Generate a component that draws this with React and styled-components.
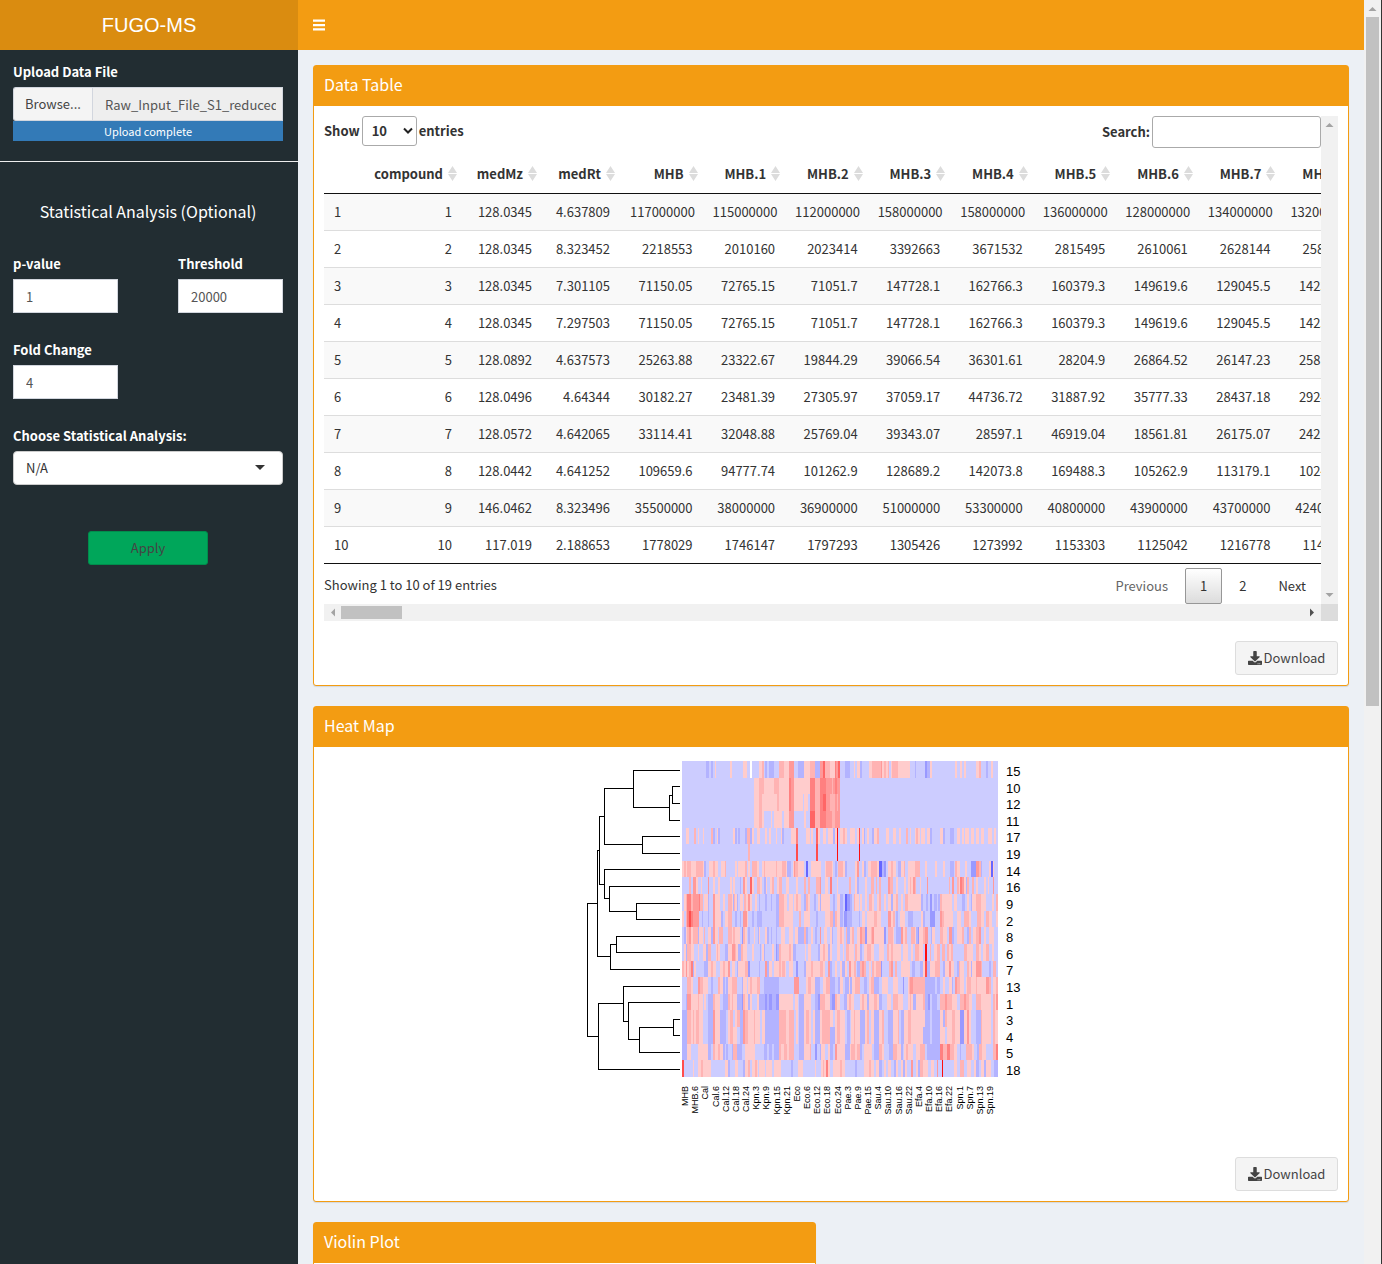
import React from "react";
import styled, { createGlobalStyle } from "styled-components";

const GlobalStyle = createGlobalStyle`
  *, *::before, *::after { box-sizing: border-box; }
  html, body, #root { height: 100%; }
  body {
    margin: 0;
    overflow: hidden;
    background: #ecf0f5;
    color: #333;
    font: 400 13px/20px "Source Sans Pro", "Noto Sans CJK SC", "Noto Sans", sans-serif;
  }
  button, input, select { font: inherit; color: inherit; margin: 0; }
`;

/* ---------- page frame ---------- */

const Page = styled.div`
  display: flex;
  height: 100vh;
`;

const Sidebar = styled.aside`
  flex: none;
  width: 298px;
  background: #222d32;
  color: #fff;
`;

const Logo = styled.a`
  display: block;
  height: 50px;
  background: #da8c10;
  color: #fff;
  font: 20px/50px "Liberation Sans", Arial, sans-serif;
  text-align: center;
  text-decoration: none;
`;

const Main = styled.div`
  flex: 1;
  min-width: 0;
  overflow: hidden;
`;

const Navbar = styled.header`
  display: flex;
  align-items: center;
  height: 50px;
  padding: 0 15px;
  background: #f39c12;
`;

const MenuButton = styled.button`
  display: flex;
  padding: 0;
  border: 0;
  background: none;
  color: #fff;
`;

const Content = styled.main`
  display: flex;
  flex-direction: column;
  gap: 20px;
  padding: 15px;
`;

/* ---------- scroll bars ---------- */

const PageRail = styled.div`
  flex: none;
  display: flex;
  flex-direction: column;
  align-items: center;
  width: 18px;
  background: #f1f1f1;
  border-right: 1px solid #333;
`;

const VRail = styled.div`
  flex: none;
  display: flex;
  flex-direction: column;
  justify-content: space-between;
  align-items: center;
  width: 17px;
  background: #f1f1f1;
`;

const HRail = styled.div`
  flex: 1;
  display: flex;
  align-items: center;
  background: #f1f1f1;
`;

const RailCorner = styled.div`
  width: 17px;
  background: #dcdcdc;
`;

const Thumb = styled.div`
  width: ${(p) => p.$w};
  height: ${(p) => p.$h};
  margin-right: ${(p) => (p.$push ? "auto" : "0")};
  background: #c1c1c1;
`;

const turns = { up: 0, right: 90, down: 180, left: 270 };
const RailArrow = ({ dir, dark }) => (
  <svg width="17" height="17" viewBox="0 0 17 17" aria-hidden="true">
    <path
      d="M4.500 11h8L8.500 7z"
      fill={dark ? "#505050" : "#a3a3a3"}
      transform={`rotate(${turns[dir]} 8.500 8.500)`}
    />
  </svg>
);

/* ---------- sidebar form ---------- */

const FormSection = styled.section`
  display: flex;
  flex-direction: column;
  padding: ${(p) => p.$pad};
  border-bottom: ${(p) => (p.$ruled ? "1px solid #eee" : "0")};
`;

const Label = styled.label`
  display: block;
  margin-bottom: 5px;
  font-weight: 700;
`;

const FileRow = styled.div`
  display: flex;
  height: 34px;
`;

const BrowseButton = styled.button`
  flex: none;
  width: 79px;
  padding: 0;
  border: 1px solid #d2d6de;
  border-right: 0;
  border-radius: 3px 0 0 3px;
  background: #f4f4f4;
  color: #444;
`;

const TextInput = styled.input`
  width: 100%;
  min-width: 0;
  height: 34px;
  padding: ${(p) => (p.readOnly ? "6px 6px 6px 12px" : "6px 12px")};
  border: 1px solid #d2d6de;
  border-radius: 0;
  outline: 0;
  background: ${(p) => (p.readOnly ? "#eee" : "#fff")};
  color: #555;
`;

const Progress = styled.div`
  height: 20px;
  background: #337ab7;
  font-size: 11px;
  text-align: center;
`;

const SectionTitle = styled.h4`
  margin: 0 0 33px;
  font-size: 16px;
  font-weight: 400;
  line-height: 20px;
  text-align: center;
`;

const FieldGrid = styled.div`
  display: grid;
  grid-template-columns: 105px 105px;
  justify-content: space-between;
  row-gap: 27px;
  margin-bottom: 27px;
`;

const SelectWrap = styled.span`
  display: inline-grid;
  align-items: center;
  width: ${(p) => p.$w};
  & > * { grid-area: 1 / 1; }
  & > svg {
    justify-self: end;
    margin-right: ${(p) => p.$inset};
    pointer-events: none;
  }
`;

const Select = styled.select`
  width: 100%;
  height: ${(p) => p.$h};
  padding: 0 ${(p) => p.$padX};
  border: 1px solid ${(p) => p.$line};
  border-radius: ${(p) => p.$radius};
  appearance: none;
  outline: 0;
  background: #fff;
  color: #333;
`;

const ApplyButton = styled.button`
  align-self: center;
  width: 120px;
  height: 34px;
  margin-top: 46px;
  border: 1px solid #008d4c;
  border-radius: 3px;
  background: #00a65a;
  color: #444;
`;

/* ---------- boxes ---------- */

const Box = styled.section`
  width: ${(p) => (p.$half ? "503px" : "auto")};
  border: 1px solid #f39c12;
  border-radius: 3px;
  background: #fff;
  box-shadow: 0 1px 1px rgba(0, 0, 0, 0.1);
`;

const BoxTitle = styled.h3`
  margin: 0;
  height: 40px;
  padding: 8px 10px;
  background: #f39c12;
  color: #fff;
  font-size: 16px;
  font-weight: 400;
  line-height: 20px;
`;

const BoxBody = styled.div`
  display: flex;
  flex-direction: column;
  gap: ${(p) => p.$gap || "0"};
  min-height: 60px;
  padding: 10px;
`;

const DownloadButton = styled.button`
  display: flex;
  align-items: center;
  justify-content: center;
  gap: 2px;
  align-self: flex-end;
  width: 103px;
  height: 34px;
  padding: 0;
  border: 1px solid #ddd;
  border-radius: 3px;
  background: #f4f4f4;
  color: #444;
`;

const Download = () => (
  <DownloadButton type="button">
    <svg width="14" height="14" viewBox="0 0 512 512" fill="currentColor" aria-hidden="true">
      <path d="M216 0h80c13.300 0 24 10.700 24 24v168h87.700c17.800 0 26.700 21.500 14.100 34.100L269.700 378.300c-7.500 7.500-19.800 7.500-27.300 0L90.100 226.100c-12.600-12.600-3.700-34.100 14.100-34.100H192V24c0-13.300 10.700-24 24-24zm296 376v112c0 13.300-10.700 24-24 24H24c-13.300 0-24-10.700-24-24V376c0-13.300 10.700-24 24-24h146.700l49 49c20.100 20.100 52.500 20.100 72.600 0l49-49H488c13.300 0 24 10.700 24 24zm-124 88c0-11-9-20-20-20s-20 9-20 20 9 20 20 20 20-9 20-20zm64 0c0-11-9-20-20-20s-20 9-20 20 9 20 20 20 20-9 20-20z" />
    </svg>
    Download
  </DownloadButton>
);

/* ---------- data table ---------- */

const ScrollFrame = styled.div`
  display: flex;
  flex-direction: column;
`;

const ScrollRow = styled.div`
  display: flex;
  height: ${(p) => p.$h || "auto"};
`;

const ScrollView = styled.div`
  flex: 1;
  min-width: 0;
  overflow: hidden;
`;

const TableBar = styled.div`
  display: flex;
  justify-content: space-between;
  height: ${(p) => p.$h};
`;

const InlineLabel = styled.label`
  display: flex;
  align-items: center;
  gap: 2px;
  height: ${(p) => p.$h};
  font-weight: 700;
`;

const SearchInput = styled.input`
  width: 169px;
  height: 32px;
  padding: 5px;
  border: 1px solid #aaa;
  border-radius: 3px;
  outline: 0;
  background: transparent;
`;

const Table = styled.table`
  width: 1039px;
  table-layout: fixed;
  border-collapse: separate;
  border-spacing: 0;
  border-bottom: 1px solid #111;
`;

const Col = styled.col`
  width: ${(p) => p.$w || "auto"};
`;

const HeadCell = styled.th`
  height: 40px;
  padding: 0 4px 0 0;
  border-bottom: 1px solid #111;
  line-height: 20px;
  white-space: nowrap;
`;

const HeadInner = styled.span`
  display: flex;
  align-items: center;
  justify-content: flex-end;
  gap: 4px;
`;

const Row = styled.tr`
  background: ${(p) => (p.$odd ? "#f9f9f9" : "#fff")};
  & > * {
    height: ${(p) => (p.$first ? "36px" : "37px")};
    padding: 0 10px;
    border-top: ${(p) => (p.$first ? "0" : "1px solid #ddd")};
    font-weight: 400;
    text-align: right;
  }
  & > th { text-align: left; }
`;

const Info = styled.div`
  padding-top: 11px;
`;

const Pager = styled.nav`
  display: flex;
  gap: 2px;
  padding-top: 4px;
`;

const PageButton = styled.button`
  min-width: 37px;
  height: 36px;
  padding: 0 14px;
  border: 1px solid ${(p) => (p.$current ? "#979797" : "transparent")};
  border-radius: 2px;
  background: ${(p) => (p.$current ? "linear-gradient(#fff, #dcdcdc)" : "transparent")};
  color: ${(p) => (p.disabled ? "#666" : "#333")};
`;

const SortIcon = () => (
  <svg width="11" height="15" viewBox="0 0 11 15" fill="#dcdcdc" aria-hidden="true">
    <path d="M5.500 0L10 7H1zM5.500 15L10 8H1z" />
  </svg>
);

const headings = ["compound", "medMz", "medRt", "MHB", "MHB.1", "MHB.2", "MHB.3", "MHB.4", "MHB.5", "MHB.6", "MHB.7", "MHB.8"];

const records = [
  "1 128.0345 4.637809 117000000 115000000 112000000 158000000 158000000 136000000 128000000 134000000 132000000",
  "2 128.0345 8.323452 2218553 2010160 2023414 3392663 3671532 2815495 2610061 2628144 2580412",
  "3 128.0345 7.301105 71150.05 72765.15 71051.7 147728.1 162766.3 160379.3 149619.6 129045.5 142310.4",
  "4 128.0345 7.297503 71150.05 72765.15 71051.7 147728.1 162766.3 160379.3 149619.6 129045.5 142310.4",
  "5 128.0892 4.637573 25263.88 23322.67 19844.29 39066.54 36301.61 28204.9 26864.52 26147.23 25811.62",
  "6 128.0496 4.64344 30182.27 23481.39 27305.97 37059.17 44736.72 31887.92 35777.33 28437.18 29240.31",
  "7 128.0572 4.642065 33114.41 32048.88 25769.04 39343.07 28597.1 46919.04 18561.81 26175.07 24218.55",
  "8 128.0442 4.641252 109659.6 94777.74 101262.9 128689.2 142073.8 169488.3 105262.9 113179.1 102447.8",
  "9 146.0462 8.323496 35500000 38000000 36900000 51000000 53300000 40800000 43900000 43700000 42400000",
  "10 117.019 2.188653 1778029 1746147 1797293 1305426 1273992 1153303 1125042 1216778 1142086",
].map((line) => line.split(" "));

const DataTable = () => (
  <ScrollFrame>
    <ScrollRow $h="488px">
      <ScrollView>
        <TableBar $h="38px">
          <InlineLabel $h="30px">
            Show
            <SelectWrap $w="55px" $inset="4px">
              <Select $h="30px" $padX="9px" $radius="3px" $line="#aaa" defaultValue="10">
                <option>10</option>
                <option>25</option>
                <option>50</option>
                <option>100</option>
              </Select>
              <svg width="10" height="8" viewBox="0 0 10 8" fill="none" stroke="#222" strokeWidth="2">
                <path d="M1 1.500l4 4 4-4" />
              </svg>
            </SelectWrap>
            entries
          </InlineLabel>
          <InlineLabel $h="32px">
            Search:
            <SearchInput type="search" />
          </InlineLabel>
        </TableBar>
        <Table>
          <colgroup>
            <Col $w="44px" />
            <Col $w="94px" />
            <Col $w="80px" />
            <Col $w="78px" />
            {headings.slice(3).map((h) => <Col key={h} />)}
          </colgroup>
          <thead>
            <tr>
              <HeadCell />
              {headings.map((h) => (
                <HeadCell key={h} scope="col">
                  <HeadInner>{h}<SortIcon /></HeadInner>
                </HeadCell>
              ))}
            </tr>
          </thead>
          <tbody>
            {records.map((cells, i) => (
              <Row key={i} $odd={i % 2 === 0} $first={i === 0}>
                <th scope="row">{i + 1}</th>
                {cells.map((c, j) => <td key={j}>{c}</td>)}
              </Row>
            ))}
          </tbody>
        </Table>
        <TableBar $h="40px">
          <Info>Showing 1 to 10 of 19 entries</Info>
          <Pager aria-label="Table pages">
            <PageButton type="button" disabled>Previous</PageButton>
            <PageButton type="button" $current>1</PageButton>
            <PageButton type="button">2</PageButton>
            <PageButton type="button">Next</PageButton>
          </Pager>
        </TableBar>
      </ScrollView>
      <VRail><RailArrow dir="up" /><RailArrow dir="down" /></VRail>
    </ScrollRow>
    <ScrollRow $h="17px">
      <HRail>
        <RailArrow dir="left" />
        <Thumb $w="61px" $h="13px" $push />
        <RailArrow dir="right" dark />
      </HRail>
      <RailCorner />
    </ScrollRow>
  </ScrollFrame>
);

/* ---------- heat map ---------- */

const palette = {
  L: "#ccccff", B: "#b3b3ff", D: "#9999ff", E: "#6666ff", P: "#ffcccc", Q: "#ffb3b3",
  R: "#ff9999", S: "#ff8080", T: "#ff6666", U: "#ff4d4d", V: "#ff0d0d", W: "#ffffff",
};

/* Each row: label, then colour changes ("start + colour") for the left and the right half. */
const heatRows = [
  ["15", "21L 93B 102L 108B 114L 120P 124L 165P 171L 204P 216L 225W 231L 252P 261Q 267L 270B 276L 282B 297L 312Q 327P 342R 357L 369B 387P 405Q 420B 435R 444T 450Q 465P",
    "0S 3R 9T 15L 30B 45L 57P 60L 66P 75B 81L 102P 111Q 138R 141P 147Q 153P 159Q 162L 168P 171Q 189P 225L 240B 243L 270D 276B 285P 291L 360P 366L 375P 381L 387P 393L 423P 432Q 438L 453B 459L 468P 474L"],
  ["10", "21L 237P 252Q 267P 297Q 312P 342S 348R 357P 405S 420Q 435S 453R 471Q 474R", "0S 6R 15L"],
  ["12", "21L 237P 252Q 261P 306Q 312P 342S 348R 357P 384L 387P 399L 405S 420Q 435S 444T 453R 465Q", "0R 6Q 9R 15L"],
  ["11", "21L 237P 252Q 261P 267L 288P 291L 297P 321L 327P 342R 357L 387P 393L 405T 420Q 435S 453R 471Q", "0R 15L"],
  ["17", "21L 33P 42L 57Q 63L 69P 72L 84P 87L 108Q 114B 120L 126P 129B 135L 174P 180B 186L 189B 195L 210B 216Q 225B 231P 237L 246P 255L 270P 276L 282P 288L 303P 306L 318P 321B 327L 348P 363S 369L 393P 405L 408P 414L 423T 429P 435L 444P 453L 459P 474B",
    "0P 6V 9L 15P 24Q 30P 36L 45P 60L 66P 72U 75L 81P 87B 90L 96P 102L 111B 117P 126Q 132L 153P 162L 174P 183L 192P 198L 213Q 219L 225P 228L 240P 243Q 249P 255L 258P 270L 276P 285B 291L 306P 306L 315P 324B 330L 345B 357L 366P 375L 381P 387L 390P 402L 408P 417L 423P 432L 438P 447L 459P 471L 477P 483L"],
  ["19", "21L 219Q 225L 363U 369L 423U 429L", "0L 6V 9L 72V 75L"],
  ["14", "21P 27Q 33P 36Q 48P 63Q 84P 87B 93L 102P 114Q 120P 129L 138P 150Q 153L 180P 186L 189P 210Q 216L 219P 225L 231Q 246P 252L 261P 267Q 270P 303Q 306P 321Q 333P 336B 348L 354P 357R 360Q 369P 387L 393E 399L 408P 438L 450P 453Q 471P 474L",
    "0B 6L 9Q 24P 30B 36L 60P 66R 72L 81P 87B 93L 99P 108Q 126P 132E 141B 147D 153L 159P 168Q 174P 183L 189B 198P 207Q 210L 219P 240Q 255L 270P 276L 300P 306L 324P 330L 345B 357L 360Q 366P 375L 390P 396L 408D 423R 432Q 438B 441L 462P 468E 474P 477L"],
  ["16", "21L 42Q 48L 54R 63P 69L 78P 81L 99R 102L 114P 120L 129P 135L 165P 171L 174P 180L 195B 198L 204R 210P 216L 225T 231P 237L 246Q 255P 261L 267B 273P 276L 285P 291Q 297L 306P 312Q 321L 333P 342L 363P 369L 387Q 393L 399Q 405L 423Q 435R 438L 450P 459L 465S 471L",
    "0L 6P 9L 42Q 48L 60P 66B 72L 90P 96L 108Q 117L 123Q 126L 132Q 138L 159R 165Q 174L 183P 189L 207P 213L 219P 225Q 228P 234R 240Q 243L 255P 258L 276R 279L 342Q 345L 351R 357L 366Q 372P 375S 381R 387P 393B 396Q 402L 411Q 417L 423P 429L 447P 453L 459P 462L 474R 477L"],
  ["9", "21L 27P 33Q 36S 48Q 54R 72S 75Q 84L 87P 99B 102L 114R 120P 135L 144P 150L 159Q 171P 174B 177Q 180P 186B 189L 195P 204L 207Q 213P 219R 225P 231L 240P 246L 252B 255L 270B 276L 288B 291L 303B 312Q 327P 336L 342P 354L 357P 363Q 369P 378L 387B 393Q 399P 405L 417B 423L 429P 435B 438P 465L 474B",
    "0L 6P 15B 24L 30E 36D 45B 51L 57Q 60P 72L 75P 81L 90P 96L 102Q 111P 117L 126P 132Q 138L 147P 153L 159P 168B 174P 183Q 189L 198P 204L 210Q 219P 258B 264L 273B 279L 285D 291L 297B 306L 309B 315Q 321P 351L 357P 366L 381B 390L 396P 402L 408B 411P 423Q 438P 453L 471P 477L 483Q"],
  ["2", "21P 27L 33Q 36S 42U 48S 54R 72L 81B 84L 99B 102L 114R 120P 138B 144L 150P 159Q 171L 180B 186L 195B 198L 204R 216P 219L 231B 237L 246B 261L 303B 312Q 327P 354L 372Q 378L 387P 405L 423B 429L 450P 465Q 474B",
    "0Q 6P 15B 24L 27D 36B 51L 72B 75L 81P 90L 96P 117Q 126P 138L 159R 168P 174Q 180L 183B 189L 195P 210L 219B 234L 258P 264B 270L 285D 300L 315R 321Q 327P 354L 366P 378L 387Q 402P 408L 426Q 438P 447L 453Q 462P 471L 483P"],
  ["8", "21L 27B 33P 36Q 42R 48P 54Q 69B 72P 84L 87Q 90L 99P 108B 114R 120P 129L 132Q 144L 159Q 171P 174Q 180P 195L 201D 204Q 210P 216L 219B 225L 237P 240L 249B 252P 255L 270P 276B 282L 288B 291L 303B 306L 318P 330L 342P 354L 360P 369B 387Q 393B 399L 408P 414L 420B 426L 435R 438L 447P 456L 465P 471B 474L",
    "0L 6P 15Q 21P 27L 33Q 36B 45P 51Q 57L 66P 75R 81Q 90D 96P 108Q 111R 117P 147D 153L 159Q 168Q 174P 177L 183B 198R 204P 210Q 216L 228Q 240P 243B 249D 252P 264Q 270R 279L 288B 291P 300L 315Q 324P 336L 342R 351B 357L 366P 381Q 387L 396B 402Q 408L 414P 423Q 432R 438L 447P 453L 462P 477L"],
  ["6", "21L 27P 33B 36Q 48P 57L 69P 72L 84P 93B 99Q 108L 123P 126Q 129P 135L 150B 159P 171R 180Q 183P 189B 198Q 204P 216L 231P 237L 255B 258L 261P 267B 270L 291P 297L 303D 306B 312Q 318P 342Q 348P 354B 363L 390P 393L 399P 408L 429B 435P 444Q 450P 459B 465P 471L",
    "0L 6P 15L 24P 27L 33Q 42P 57L 60Q 66P 75B 81L 87P 96Q 108P 117L 132P 147L 156Q 162P 168Q 174P 198L 204P 219L 228P 234L 240Q 252P 264L 270V 276L 285Q 288L 297P 306Q 315L 321Q 330L 336Q 342P 348Q 354L 387Q 396P 414L 423Q 432P 438L 444P 453Q 462L 471P 477L"],
  ["7", "21Q 27P 33R 36P 42Q 48S 54B 57P 63L 87B 99P 108Q 114P 123L 135P 144Q 150P 159R 165L 171P 180L 186B 189P 210Q 219D 225L 252B 255L 270R 276B 282P 291L 297P 312Q 318P 321Q 330P 333L 342P 354L 363D 369L 387B 393P 408Q 414P 435Q 444P 450L 459R 465B 471L",
    "0P 6L 15P 21B 30P 36L 42R 48P 57Q 63L 66B 75Q 81R 87Q 93L 102P 108L 111Q 117P 123Q 138D 141L 162Q 168R 174L 180Q 186L 198P 225L 231B 240L 255B 264P 270U 276B 285P 300Q 315L 324B 330P 342R 348P 357L 366B 372Q 375P 387L 396Q 402P 408B 411P 423R 438Q 441L 462B 468L 474Q 483L"],
  ["13", "21L 36Q 48P 54L 69R 75Q 84P 99L 108B 114L 129Q 135P 144B 150L 153B 159P 171Q 186L 201B 204P 216L 219P 225Q 231P 246Q 255L 267B 312L 357R 372L 393P 399Q 408P 420B 435L 444P 453Q 465B",
    "0L 9B 15P 24L 30B 42P 45B 51P 60Q 75L 87B 96L 102P 108Q 117B 132L 141P 159L 174P 189L 204D 207L 219P 222Q 225R 234Q 270B 300L 306B 315L 324P 330L 342P 351B 354L 360R 366Q 375P 387L 393P 396Q 408P 423Q 426P 453R 462Q 468L 474P 483Q"],
  ["1", "21L 33B 36R 48P 69Q 72P 84L 87P 93L 99B 114Q 120P 135L 144B 159Q 165P 171Q 174P 186B 201D 204Q 210P 219B 225P 231L 246P 252B 267B 270D 276B 282D 291B 303D 312P 354L 360P 369L 372B 387P 408L 420B 429D 435Q 450P 465B 471D",
    "0Q 6P 15L 27B 36P 42Q 48P 57L 75P 81Q 87P 96B 102P 117Q 126P 132B 141L 156P 168L 174Q 189P 204L 219P 225Q 228P 234B 243P 264Q 270B 279D 285L 291B 306L 315Q 330R 336Q 351P 366L 375Q 387R 393Q 402P 411L 423Q 438P 468L 474Q 480P 483R"],
  ["3", "21B 36Q 48P 54Q 57P 63Q 72P 84L 99B 114R 120P 135B 144B 153L 159P 165Q 174L 180P 186Q 195B 204R 210Q 219P 237Q 240P 255L 261P 270B 312Q 333P 342Q 357L 363P 369L 372B 387P 393Q 402P 408L 414P 420B 435P 441Q 465P 474L",
    "0P 6Q 15P 30L 36B 45L 48P 57Q 60P 75B 90P 96Q 102L 108P 117B 132P 141Q 147L 159B 174P 189Q 192L 198B 207P 219Q 228P 270B 285L 291B 315P 324B 330Q 336P 351Q 360P 375D 387P 396R 402P 408L 423B 438Q 441P 468L 474Q 480P"],
  ["4", "21B 36Q 48P 54Q 57P 63Q 72P 84L 99B 114R 120P 135B 153L 159P 165Q 174P 186L 195B 204R 210Q 219P 237Q 240P 255L 261P 270B 312Q 333P 342Q 357L 363P 369L 372B 387P 393Q 402P 408L 414P 420B 435P 441Q 465B",
    "0P 6Q 15P 30L 36B 45L 48P 57Q 60P 75B 90P 96Q 102L 108P 117B 132P 141Q 147L 159B 174P 189Q 192L 198B 207P 219Q 228P 264B 285L 291B 315P 330L 336P 351Q 360P 375D 387P 396R 402P 408L 423B 438Q 441P 468L 474Q 480P"],
  ["5", "21B 36P 48L 69P 99B 108L 114Q 120P 129Q 135P 144B 150L 153B 159L 171B 174Q 186B 201L 210P 240L 267B 276L 282B 291L 297B 312Q 318P 327Q 336P 342Q 357L 372B 387P 405Q 408L 420D 426L 435B 438P 450L 459P 465B 474L",
    "0R 6P 30B 45P 48Q 60P 66Q 75B 81L 87P 111L 117B 132Q 141P 147L 162B 174Q 186P 198B 204L 207P 213Q 219P 234L 243P 255Q 270L 276B 315S 324Q 336S 345Q 357P 366L 375B 378L 393Q 411P 417L 426B 432Q 441P 453L 474Q 483S"],
  ["18", "21U 27L 54P 57L 69P 78Q 84P 108L 150P 159B 165L 180P 189L 204B 210P 219Q 225L 231P 240Q 246P 249L 252P 270L 273P 291L 297P 318L 348B 354L 369P 384L 420P 423L 438P 444Q 447P 453S 459P 465L 474P",
    "0P 15Q 21P 30L 60B 66L 87P 102Q 108P 117L 123P 132B 141L 147P 153L 159P 168L 177B 183P 189L 198P 204B 210P 216L 228R 234L 243P 249B 255Q 264P 279L 288P 297L 306R 309L 321V 324L 357P 366L 375Q 387L 396P 408L 417P 423B 432L 438P 447B 453P 468L 477B"],
];

const heatCells = heatRows.flatMap(([label, left, right], row) => {
  const read = (text, shift) => text.split(" ").map((s) => [parseInt(s, 10) + shift, s.slice(-1)]);
  const stops = [...read(left, -21), ...read(right, 459)];
  const top = Math.round((row * 316) / 19);
  const bottom = Math.round(((row + 1) * 316) / 19);
  return stops.map(([x, colour], i) => {
    const end = i + 1 < stops.length ? stops[i + 1][0] : 948;
    return <rect key={`${label}-${i}`} x={x / 3} y={top} width={Math.max(0, end - x) / 3} height={bottom - top} fill={palette[colour]} />;
  });
});

const sampleLabels = "MHB MHB.6 Cal Cal.6 Cal.12 Cal.18 Cal.24 Kpn.3 Kpn.9 Kpn.15 Kpn.21 Eco Eco.6 Eco.12 Eco.18 Eco.24 Pae.3 Pae.9 Pae.15 Sau.4 Sau.10 Sau.16 Sau.22 Efa.4 Efa.10 Efa.16 Efa.22 Spn.1 Spn.7 Spn.13 Spn.19".split(" ");

/* Each merge: x of first branch end, its y, x of the join, y of second branch, x of its end. */
const merges = [
  [98, 29, 91, 46, 98], [91, 38, 88, 63, 98], [98, 13, 52, 50, 88], [98, 79, 61, 96, 98],
  [52, 31, 23, 87, 61], [98, 146, 55, 162, 98], [98, 129, 28, 154, 55], [98, 112, 23, 141, 28],
  [23, 59, 18, 127, 23], [98, 179, 35, 195, 98], [35, 187, 29, 212, 98], [18, 93, 16, 199, 29],
  [98, 262, 92, 278, 98], [92, 270, 58, 295, 98], [98, 245, 47, 282, 58], [98, 229, 42, 264, 47],
  [42, 246, 17, 312, 98], [16, 146, 6, 279, 17],
];

const Plot = styled.svg`
  display: block;
  align-self: center;
  font-family: "Liberation Sans", Arial, sans-serif;
`;

const HeatMap = () => (
  <Plot width="500" height="400" viewBox="0 0 500 400" role="img" aria-label="Heat map with dendrogram">
    <path
      transform="translate(0.500 0.500)"
      d={merges.map(([x1, y1, x, y2, x2]) => `M${x1} ${y1}H${x}V${y2}H${x2}`).join("")}
      fill="none"
      stroke="#000"
      shapeRendering="crispEdges"
    />
    <g transform="translate(101 4)" shapeRendering="crispEdges">{heatCells}</g>
    <g fontSize="13">
      {heatRows.map(([label], i) => (
        <text key={label} x="425" y={Math.round(19 + (i * 299) / 18)}>{label}</text>
      ))}
    </g>
    <g fontSize="9" textAnchor="end">
      {sampleLabels.map((label, i) => (
        <text key={label} transform={`translate(${Math.round(107 + (i * 305) / 30)} 329) rotate(-90)`}>{label}</text>
      ))}
    </g>
  </Plot>
);

/* ---------- app ---------- */

export default function App() {
  return (
    <Page>
      <GlobalStyle />
      <Sidebar>
        <Logo href="#">FUGO-MS</Logo>
        <FormSection $pad="12px 15px 20px 13px" $ruled>
          <Label htmlFor="file-name">Upload Data File</Label>
          <FileRow>
            <BrowseButton type="button">Browse...</BrowseButton>
            <TextInput id="file-name" readOnly value="Raw_Input_File_S1_reduced.csv" />
          </FileRow>
          <Progress role="status">Upload complete</Progress>
        </FormSection>
        <FormSection $pad="39px 15px 20px 13px">
          <SectionTitle>Statistical Analysis (Optional)</SectionTitle>
          <FieldGrid>
            <div>
              <Label htmlFor="p-value">p-value</Label>
              <TextInput id="p-value" defaultValue="1" />
            </div>
            <div>
              <Label htmlFor="threshold">Threshold</Label>
              <TextInput id="threshold" defaultValue="20000" />
            </div>
            <div>
              <Label htmlFor="fold">Fold Change</Label>
              <TextInput id="fold" defaultValue="4" />
            </div>
          </FieldGrid>
          <Label htmlFor="analysis">Choose Statistical Analysis:</Label>
          <SelectWrap $w="100%" $inset="18px">
            <Select id="analysis" $h="34px" $padX="12px" $radius="4px" $line="#ccc">
              <option>N/A</option>
            </Select>
            <svg width="10" height="6" viewBox="0 0 10 6" fill="#333" aria-hidden="true">
              <path d="M0 0h10L5 5z" />
            </svg>
          </SelectWrap>
          <ApplyButton type="button">Apply</ApplyButton>
        </FormSection>
      </Sidebar>
      <Main>
        <Navbar>
          <MenuButton type="button" aria-label="Toggle navigation">
            <svg width="12" height="12" viewBox="0 0 12 12" fill="currentColor">
              <path d="M0 .5h12v2.300H0zM0 4.900h12v2.300H0zM0 9.300h12v2.300H0z" />
            </svg>
          </MenuButton>
        </Navbar>
        <Content>
          <Box>
            <BoxTitle>Data Table</BoxTitle>
            <BoxBody $gap="20px">
              <DataTable />
              <Download />
            </BoxBody>
          </Box>
          <Box>
            <BoxTitle>Heat Map</BoxTitle>
            <BoxBody>
              <HeatMap />
              <Download />
            </BoxBody>
          </Box>
          <Box $half>
            <BoxTitle>Violin Plot</BoxTitle>
            <BoxBody />
          </Box>
        </Content>
      </Main>
      <PageRail>
        <RailArrow dir="up" />
        <Thumb $w="13px" $h="689px" />
      </PageRail>
    </Page>
  );
}
